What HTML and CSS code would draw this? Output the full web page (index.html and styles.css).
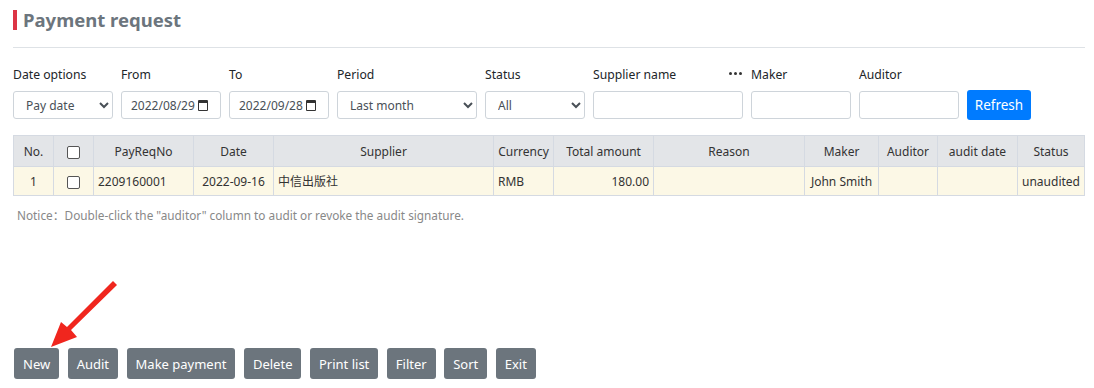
FILE: index.html
```html
<!DOCTYPE HTML>
<html>
<head>
<meta http-equiv="Content-Type" content="text/html; charset=utf-8">
<title>Payment request</title>
<link rel="stylesheet" href="styles.css">
</head>
<body>

<h1 class="page-title">Payment request</h1>

<div class="search-bar">
	<div class="field">
		<label>Date options</label>
		<select class="ctl w100"><option>Pay date</option></select>
	</div>
	<div class="field">
		<label>From</label>
		<div class="ctl w100 date">2022/08/29 <span class="cal"></span></div>
	</div>
	<div class="field">
		<label>To</label>
		<div class="ctl w100 date">2022/09/28 <span class="cal"></span></div>
	</div>
	<div class="field">
		<label>Period</label>
		<select class="ctl w140"><option>Last month</option></select>
	</div>
	<div class="field">
		<label>Status</label>
		<select class="ctl w100"><option>All</option></select>
	</div>
	<div class="field">
		<label class="split">Supplier name <span class="more"><i></i><i></i><i></i></span></label>
		<input type="text" class="ctl w150">
	</div>
	<div class="field">
		<label>Maker</label>
		<input type="text" class="ctl w100">
	</div>
	<div class="field">
		<label>Auditor</label>
		<input type="text" class="ctl w100">
	</div>
	<button class="btn-refresh">Refresh</button>
</div>

<table class="grid">
	<colgroup>
		<col style="width:40px"><col style="width:40px"><col style="width:100px"><col style="width:80px">
		<col style="width:220px"><col style="width:60px"><col style="width:100px"><col style="width:151px">
		<col style="width:74px"><col style="width:59px"><col style="width:80px"><col>
	</colgroup>
	<thead>
		<tr>
			<th>No.</th>
			<th><span class="chk"></span></th>
			<th>PayReqNo</th>
			<th>Date</th>
			<th>Supplier</th>
			<th>Currency</th>
			<th>Total amount</th>
			<th>Reason</th>
			<th>Maker</th>
			<th>Auditor</th>
			<th>audit date</th>
			<th>Status</th>
		</tr>
	</thead>
	<tbody>
		<tr>
			<td class="c">1</td>
			<td class="c"><span class="chk"></span></td>
			<td>2209160001</td>
			<td class="c">2022-09-16</td>
			<td>中信出版社</td>
			<td>RMB</td>
			<td class="r">180.00</td>
			<td></td>
			<td class="c">John Smith</td>
			<td></td>
			<td></td>
			<td class="c">unaudited</td>
		</tr>
	</tbody>
</table>

<p class="notice">Notice：Double-click the "auditor" column to audit or revoke the audit signature.</p>

<div class="toolbar">
	<button class="btn">New</button>
	<button class="btn">Audit</button>
	<button class="btn">Make payment</button>
	<button class="btn">Delete</button>
	<button class="btn">Print list</button>
	<button class="btn">Filter</button>
	<button class="btn">Sort</button>
	<button class="btn">Exit</button>
	<!-- pointer for the screenshot -->
	<svg class="arrow" width="80" height="75" viewBox="0 0 80 75">
		<polygon fill="#f0261e" points="77,2 79,4 33,49 39,56 13,66 23,41 29,46 75,0"/>
	</svg>
</div>

</body>
</html>
```

FILE: styles.css
```css
body{
	margin:0;
	padding:10px 9px 0 13px;
	font-family:"Noto Sans", "Noto Sans CJK SC", sans-serif;
	font-size:12.2px;
	color:#212529;
}

.page-title{
	margin:0;
	height:20px;
	border-left:4px solid #dc3545;
	padding-left:6px;
	font-size:18.5px;
	line-height:20px;
	color:#6c757d;
	font-weight:bold;
}

.search-bar{
	border-top:1px solid #dee2e6;
	margin-top:17px;
	padding-top:18px;
	display:flex;
	align-items:flex-end;
	gap:8px;
}

.field label{
	display:block;
	height:17px;
	line-height:17px;
	margin-bottom:8px;
	white-space:nowrap;
}

.field .split{
	display:flex;
	justify-content:space-between;
	align-items:center;
}

.field .more{
	display:flex;
	gap:2px;
	margin-right:1px;
	margin-bottom:2px;
}

.field .more i{
	width:3px;
	height:3px;
	border-radius:50%;
	background:#333;
}

.ctl{
	box-sizing:border-box;
	height:28px;
	border:1px solid #ced4da;
	border-radius:3px;
	background:#fff;
	font-family:inherit;
	font-size:12px;
	color:#495057;
	margin:0;
	display:block;
}

select.ctl{
	padding:0 6px 0 8px;
}

.w100{ width:100px; }
.w140{ width:140px; }
.w150{ width:150px; }

.date{
	display:flex;
	align-items:center;
	padding-left:9px;
	gap:3px;
}

.cal{
	width:8px;
	height:7px;
	border:1.5px solid #333;
	border-top-width:3px;
	border-radius:1px;
}

.btn-refresh{
	height:30px;
	width:64px;
	background:#007bff;
	color:#fff;
	border:none;
	border-radius:3px;
	font-family:inherit;
	font-size:13.5px;
	margin-bottom:-1px;
}

.grid{
	margin-top:16px;
	width:1072px;
	border-collapse:collapse;
	table-layout:fixed;
	font-size:12px;
}

.grid th,
.grid td{
	border:1px solid #d5dae2;
	padding:0 4px;
	white-space:nowrap;
	overflow:hidden;
}

.grid th{
	background:#e3e5e8;
	font-weight:normal;
	height:30px;
	color:#333;
}

.grid td{
	background:#fcf8e6;
	height:28px;
	color:#333;
}

.grid .c{ text-align:center; }
.grid .r{ text-align:right; }

.chk{
	display:inline-block;
	width:11px;
	height:11px;
	border:1px solid #555;
	border-radius:2px;
	background:#fff;
	vertical-align:middle;
}

.notice{
	margin:10px 0 0 4px;
	font-size:11.8px;
	color:#888;
}

.toolbar{
	position:relative;
	margin-top:125px;
	display:flex;
	gap:8.5px;
	padding-left:1px;
}

.btn{
	height:31px;
	padding:0 9px;
	background:#6c757d;
	color:#fff;
	border:none;
	border-radius:3px;
	font-family:inherit;
	font-size:13px;
}

.arrow{
	position:absolute;
	left:25px;
	top:-67px;
}
```
